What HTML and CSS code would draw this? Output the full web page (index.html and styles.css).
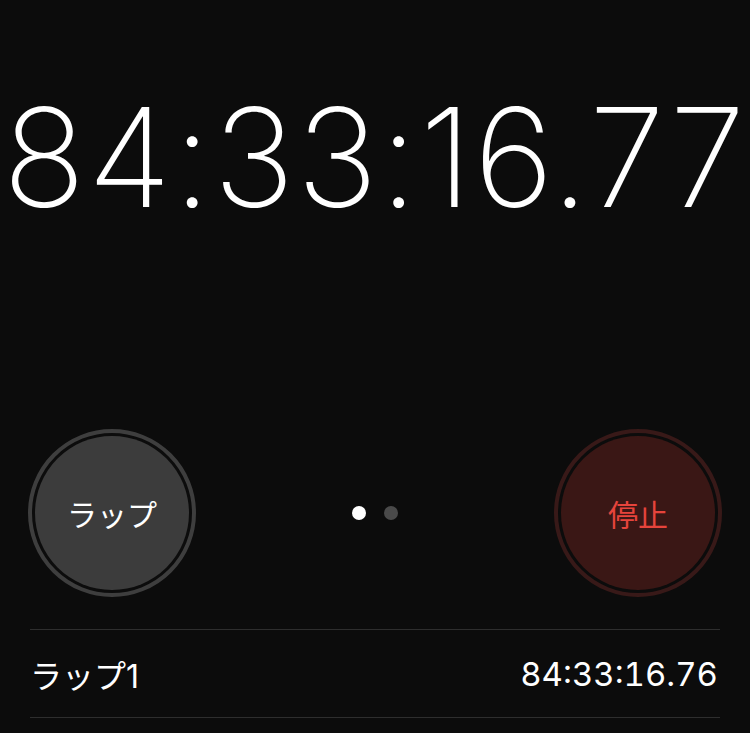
FILE: index.html
```html
<!DOCTYPE html>
<html lang="ja">
<head>
<meta charset="utf-8">
<link rel="stylesheet" href="styles.css">
</head>
<body>
<div class="screen">
  <div class="time">84:33:16.77</div>
  <div class="controls">
    <div class="btn btn-lap"><span>ラップ</span></div>
    <div class="dots"><span class="dot active"></span><span class="dot"></span></div>
    <div class="btn btn-stop"><span>停止</span></div>
  </div>
  <div class="laps">
    <div class="lap-row">
      <span class="lap-name">ラップ1</span>
      <span class="lap-time">84:33:16.76</span>
    </div>
  </div>
</div>
</body>
</html>
```

FILE: styles.css
```css
html, body {
  margin: 0;
  padding: 0;
  background: #0c0c0c;
}
.screen {
  width: 750px;
  height: 733px;
  overflow: hidden;
  background: #0c0c0c;
  color: #fff;
  font-family: Inter, "Noto Sans CJK JP", sans-serif;
}
.time {
  font-family: Inter, sans-serif;
  font-weight: 200;
  font-size: 137px;
  line-height: 1;
  padding-top: 89px;
  letter-spacing: 2px;
  text-indent: 0;
  text-align: center;
  white-space: nowrap;
}
.controls {
  margin-top: 203px;
  padding: 0 28px;
  display: flex;
  align-items: center;
  justify-content: space-between;
}
.btn {
  width: 168px;
  height: 168px;
  box-sizing: border-box;
  border-radius: 50%;
  border: 4px solid;
  padding: 3px;
  background-clip: content-box;
  display: flex;
  align-items: center;
  justify-content: center;
  font-family: "Noto Sans CJK JP", sans-serif;
  font-size: 30px;
}
.btn-lap {
  border-color: #3e3e3e;
  background-color: #3c3c3c;
  color: #fff;
}
.btn-stop {
  border-color: #381918;
  background-color: #3a1715;
  color: #e6443c;
}
.dots {
  display: flex;
  gap: 18px;
}
.dot {
  width: 14px;
  height: 14px;
  border-radius: 50%;
  background: #4a4a4a;
}
.dot.active {
  background: #fff;
}
.laps {
  margin: 32px 30px 0;
  border-top: 1px solid #2e2e2e;
}
.lap-row {
  height: 87px;
  border-bottom: 1px solid #2e2e2e;
  display: flex;
  align-items: center;
  justify-content: space-between;
  padding: 0 2px 0 0;
  font-size: 32px;
}
.lap-name {
  font-family: Inter, "Noto Sans CJK JP", sans-serif;
}
.lap-time {
  font-family: Inter, sans-serif;
  font-size: 33px;
  font-variant-numeric: tabular-nums;
}
```
